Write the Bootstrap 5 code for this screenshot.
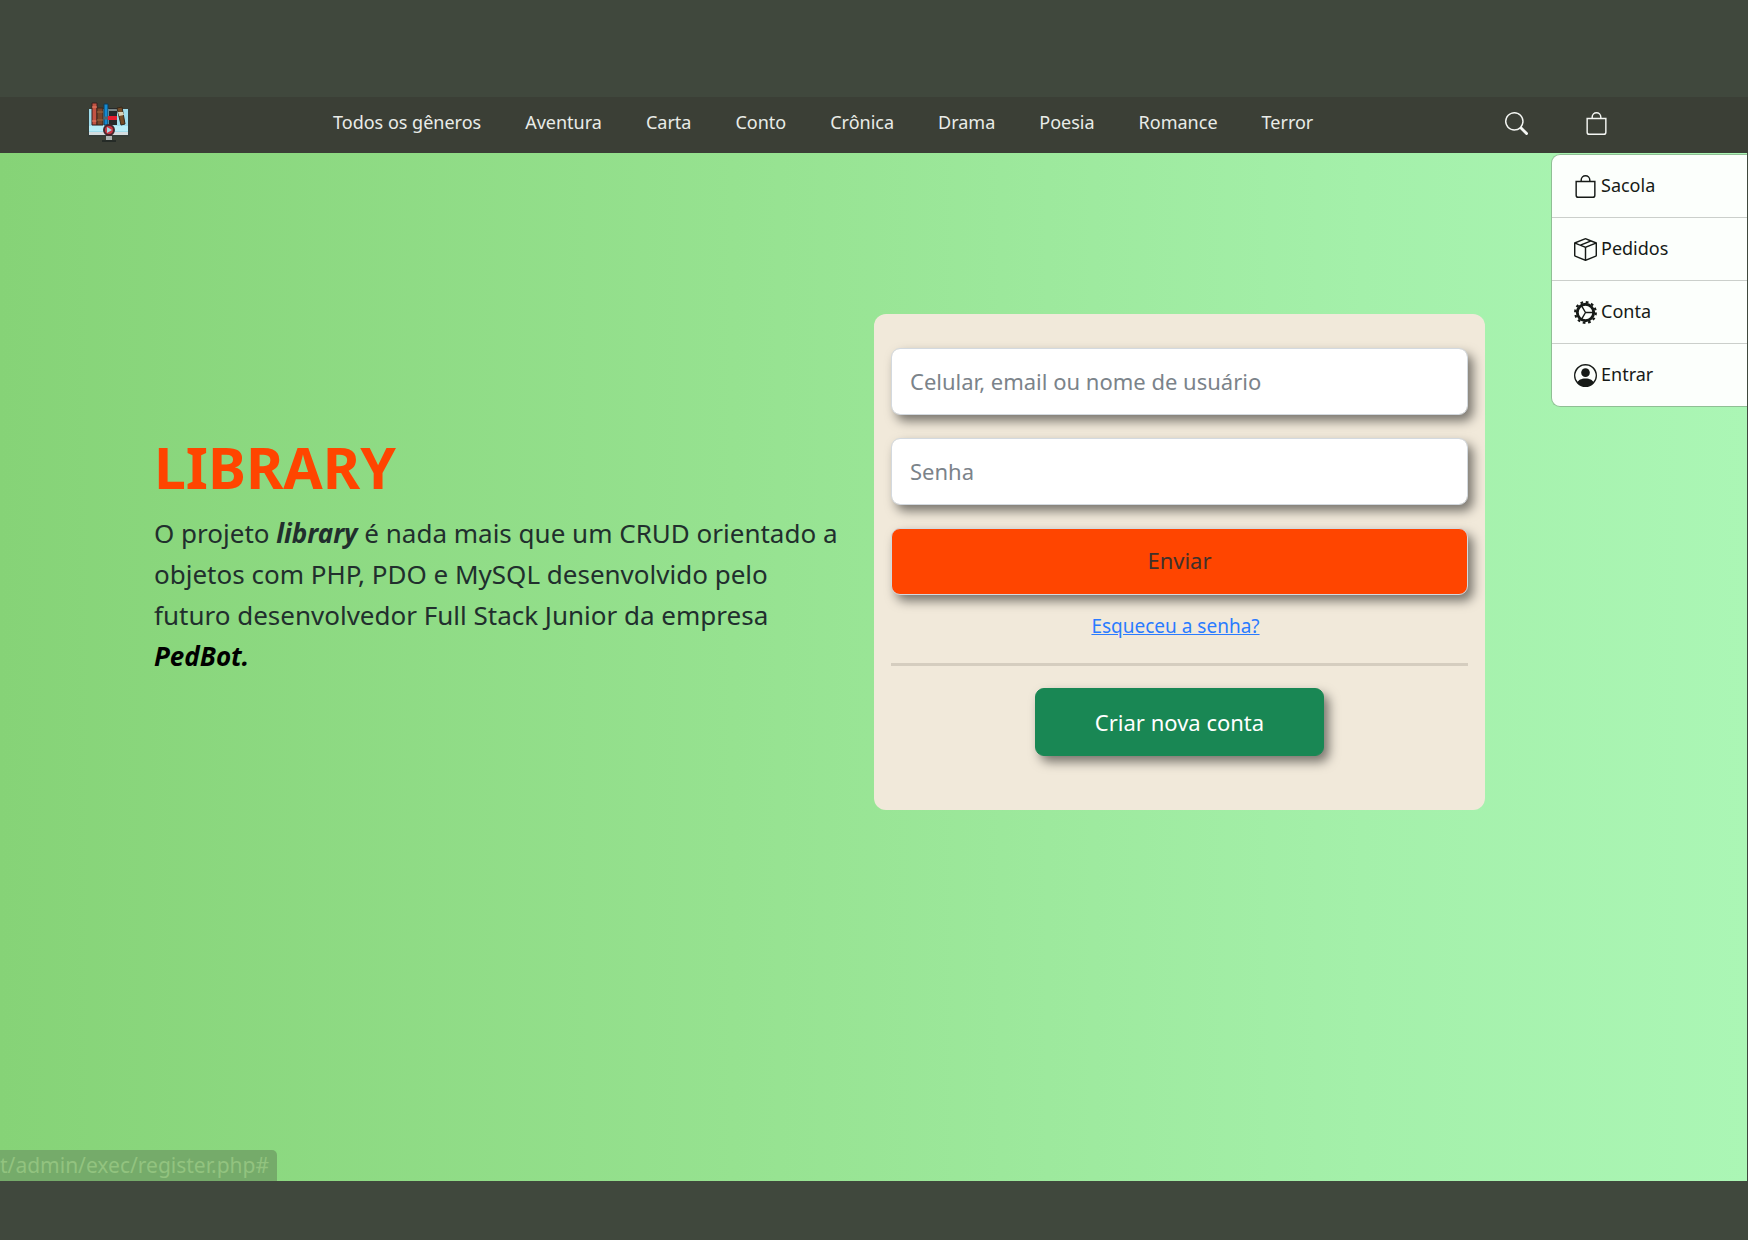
<!DOCTYPE html>
<html lang="pt-br">
<head>
<meta charset="utf-8">
<meta name="viewport" content="width=device-width, initial-scale=1">
<title>Library</title>
<link href="https://cdn.jsdelivr.net/npm/bootstrap@5.3.0/dist/css/bootstrap.min.css" rel="stylesheet">
<style>
  body { background: #40483d; font-family: "Noto Sans", "Open Sans", sans-serif; padding: 97px 0 59px; }
  .topbar { background: #3b3f36; height: 56px; padding: 0 140px 4px 88px; }
  .genres { gap: 44px; margin-left: 203px; }
  .genres a { color: #e9ece8; font-size: 18px; line-height: 24px; padding: 0 0 2px; }
  .tools { gap: 57px; }
  .tools button { background: none; border: 0; padding: 0; line-height: 0; color: #f4f6f3; }
  .hero { background: linear-gradient(90deg, #86d377, #96e290 42%, #a4f0aa 78%, #abf6b5); margin-right: 1px; padding: 161px 262px 160px 154px; gap: 24px; }
  .intro { padding-bottom: 14px; }
  .intro h1 { color: #ff4500; font-size: 57px; line-height: 66px; margin-bottom: 13px; }
  .intro p { font-size: 26px; line-height: 41px; color: #212f2d; margin: 0; max-width: 690px; }
  .intro .brand { color: #000; }
  .login { flex: 0 0 611px; background: #f1e9da; border-radius: 12px; padding: 34px 17px 54px; }
  .field, .field:focus { height: 67px; border: 1px solid #d3d9df; border-radius: 9px; font-size: 22px; padding: 0 18px 2px; box-shadow: 5px 6px 11px rgba(0,0,0,.5); }
  .field { margin-bottom: 23px; }
  .field::placeholder { color: #7b838a; }
  .send { background: #ff4500; color: #40312a; margin-bottom: 18px; }
  .forgot { font-size: 19px; line-height: 27px; color: #2a7bff; margin-right: 8px; }
  .rule { border-top: 3px solid #c9c1b3; opacity: 0.7; margin: 23px 0 22px; width: 100%; }
  .create { width: 289px; height: 68px; font-size: 22px; border-radius: 9px; box-shadow: 5px 6px 11px rgba(0,0,0,.5); }
  .side-menu { top: 1px; right: 0; width: 196px; background: #fcfffc; border: 1px solid #8fbf94; border-right: 0; border-radius: 9px 0 0 9px; }
  .side-menu a { height: 62px; gap: 4px; padding: 0 0 2px 22px; color: #161a17; font-size: 18px; }
  .side-menu li + li { border-top: 1px solid #cbcfcb; }
  .side-menu svg { margin-top: 3px; }
  .status-tip { left: 0; bottom: 0; width: 277px; height: 31px; background: #75ab6a; color: #92c37f; font-size: 21px; line-height: 30px; border-top-right-radius: 5px; overflow: hidden; }
</style>
</head>
<body class="d-flex flex-column min-vh-100">
<nav class="topbar d-flex align-items-center" aria-label="Principal">
  <a href="#" aria-label="Library">
    <svg width="42" height="42" viewBox="0 0 42 42">
      <path d="M1 7h39v25H1z" fill="#9fdcec"/>
      <path d="M1 24h39v5H1z" fill="#b9edf8"/>
      <path d="M1 30h39v3H1z" fill="#d4dcdf"/>
      <path d="M0 7v27h41V7" fill="none" stroke="#2e3a3a"/>
      <path d="M4 1h5v22H4z" fill="#c25343" stroke="#39211f"/>
      <path d="M4 5h5M4 19h5" stroke="#e98169"/>
      <path d="M9 6h6v17H9z" fill="#79452a" stroke="#3a271c"/>
      <path d="M9 10h6M9 18h6" stroke="#a26b3e"/>
      <path d="M16 2h4v21h-4z" fill="#138ad2" stroke="#123b55"/>
      <path d="M16 16h4" stroke="#55636b" stroke-width="3"/>
      <path d="M21 6h8v17h-8z" fill="#25292b"/>
      <path d="M21 8h8" stroke="#7b8585" stroke-width="2"/>
      <path d="M20 14h9v4h-9z" fill="#e51c2e"/>
      <path d="M29 6l5-1 3 17-4 1z" fill="#754b26" stroke="#33271b"/>
      <path d="M30 10l5 0 1 3-5 1z" fill="#d6d1b9"/>
      <circle cx="21" cy="28" r="5" fill="#cb3541" stroke="#44262c" stroke-width="2"/>
      <path d="M19 25l5 3-5 3z" fill="#a9d9e4"/>
      <path d="M18 34h6v4h-6z" fill="#aeb5b5"/><path d="M14 39h14" stroke="#252b27" stroke-width="2"/>
    </svg>
  </a>
  <div class="genres nav flex-nowrap text-nowrap">
    <a class="nav-link" href="#">Todos os gêneros</a><a class="nav-link" href="#">Aventura</a><a class="nav-link" href="#">Carta</a><a class="nav-link" href="#">Conto</a><a class="nav-link" href="#">Crônica</a><a class="nav-link" href="#">Drama</a><a class="nav-link" href="#">Poesia</a><a class="nav-link" href="#">Romance</a><a class="nav-link" href="#">Terror</a>
  </div>
  <div class="tools d-flex ms-auto">
    <button type="button" aria-label="Buscar"><svg width="23" height="23" viewBox="0 0 16 16" fill="currentColor"><path d="M11.742 10.344a6.5 6.5 0 1 0-1.397 1.398h-.001c.03.04.062.078.098.115l3.85 3.85a1 1 0 0 0 1.415-1.414l-3.85-3.85a1.007 1.007 0 0 0-.115-.1zM12 6.5a5.5 5.5 0 1 1-11 0 5.500 5.500 0 0 1 11 0z"/></svg></button>
    <button type="button" aria-label="Sacola"><svg width="23" height="23" viewBox="0 0 16 16" fill="currentColor"><path d="M8 1a2.500 2.500 0 0 1 2.500 2.500V4h-5v-.5A2.500 2.500 0 0 1 8 1zm3.500 3v-.5a3.500 3.500 0 1 0-7 0V4H1v10a2 2 0 0 0 2 2h10a2 2 0 0 0 2-2V4h-3.500zM2 5h12v9a1 1 0 0 1-1 1H3a1 1 0 0 1-1-1V5z"/></svg></button>
  </div>
</nav>

<main class="hero position-relative flex-grow-1">
  <div class="d-flex align-items-center justify-content-between">
  <section class="intro">
    <h1 class="fw-bold">LIBRARY</h1>
    <p>O projeto <strong><em>library</em></strong> é nada mais que um CRUD orientado a objetos com PHP, PDO e MySQL desenvolvido pelo futuro desenvolvedor Full Stack Junior da empresa <strong class="brand"><em>PedBot.</em></strong></p>
  </section>
  <form class="login d-flex flex-column align-items-center">
    <input class="field form-control" type="text" placeholder="Celular, email ou nome de usuário" aria-label="Celular, email ou nome de usuário">
    <input class="field form-control" type="password" placeholder="Senha" aria-label="Senha">
    <button class="field send form-control text-center" type="submit">Enviar</button>
    <a class="forgot" href="#">Esqueceu a senha?</a>
    <hr class="rule">
    <button class="create btn btn-success" type="button">Criar nova conta</button>
  </form>
  </div>

  <ul class="side-menu list-unstyled position-absolute m-0">
    <li><a class="d-flex align-items-center text-decoration-none" href="#"><svg width="23" height="23" viewBox="0 0 16 16" fill="currentColor"><path d="M8 1a2.500 2.500 0 0 1 2.500 2.500V4h-5v-.5A2.500 2.500 0 0 1 8 1zm3.500 3v-.5a3.500 3.500 0 1 0-7 0V4H1v10a2 2 0 0 0 2 2h10a2 2 0 0 0 2-2V4h-3.500zM2 5h12v9a1 1 0 0 1-1 1H3a1 1 0 0 1-1-1V5z"/></svg>Sacola</a></li>
    <li><a class="d-flex align-items-center text-decoration-none" href="#"><svg width="23" height="23" viewBox="0 0 16 16" fill="currentColor"><path d="M8.186 1.113a.5.5 0 0 0-.372 0L1.846 3.500l2.404.961L10.404 2l-2.218-.887zm3.564 1.426L5.596 5 8 5.961 14.154 3.500l-2.404-.961zm3.250 1.700-6.500 2.600v7.922l6.500-2.600V4.240zM7.500 14.762V6.838L1 4.239v7.923l6.500 2.600zM7.443.184a1.500 1.500 0 0 1 1.114 0l7.129 2.852A.5.5 0 0 1 16 3.500v8.662a1 1 0 0 1-.629.928l-7.185 2.874a.5.5 0 0 1-.372 0L.630 13.090a1 1 0 0 1-.630-.928V3.500a.5.5 0 0 1 .314-.464L7.443.184z"/></svg>Pedidos</a></li>
    <li><a class="d-flex align-items-center text-decoration-none" href="#"><svg width="23" height="23" viewBox="0 0 16 16" fill="none" stroke="currentColor"><circle cx="8" cy="8" r="5.700" stroke-width="2"/><circle cx="8" cy="8" r="7.200" stroke-width="1.500" stroke-dasharray="1.885 1.885"/><path d="M8 8h5.500M8 8L5.200 3.200M8 8l-2.800 4.800" stroke-width="1"/></svg>Conta</a></li>
    <li><a class="d-flex align-items-center text-decoration-none" href="#"><svg width="23" height="23" viewBox="0 0 16 16" fill="currentColor"><path d="M11 6a3 3 0 1 1-6 0 3 3 0 0 1 6 0z"/><path fill-rule="evenodd" d="M0 8a8 8 0 1 1 16 0A8 8 0 0 1 0 8zm8-7a7 7 0 0 0-5.468 11.370C3.242 11.226 4.805 10 8 10s4.757 1.225 5.468 2.370A7 7 0 0 0 8 1z"/></svg>Entrar</a></li>
  </ul>
  <div class="status-tip position-absolute text-nowrap">t/admin/exec/register.php#</div>
</main>
<script src="https://cdn.jsdelivr.net/npm/bootstrap@5.3.0/dist/js/bootstrap.bundle.min.js"></script>
</body>
</html>
